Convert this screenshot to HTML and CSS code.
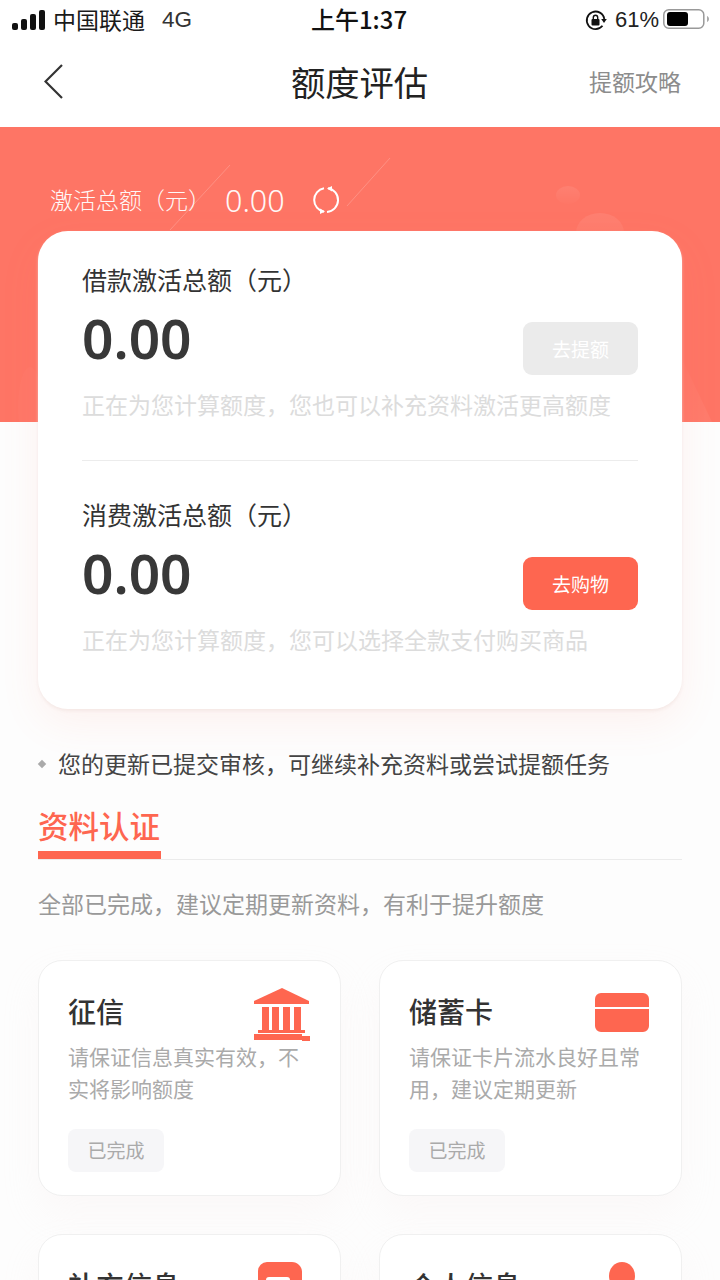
FILE: index.html
```html
<!DOCTYPE html>
<html lang="zh">
<head>
<meta charset="utf-8">
<title>额度评估</title>
<link rel="stylesheet" href="styles.css">
</head>
<body>
<div class="page">
  <div class="status">
    <div class="status-left">
      <svg class="signal" width="34" height="20" viewBox="0 0 34 20"><rect x="0" y="13" width="6" height="7" rx="2"/><rect x="9" y="9" width="6" height="11" rx="2"/><rect x="18" y="4" width="6" height="16" rx="2"/><rect x="27" y="0" width="6" height="20" rx="2"/></svg>
      <span class="carrier">中国联通</span>
      <span class="net">4G</span>
    </div>
    <div class="status-time">上午1:37</div>
    <div class="status-right">
      <svg class="lock" width="22" height="22" viewBox="0 0 22 22"><path d="M17.500 16.800A8.800 8.800 0 1 1 19.300 10" fill="none" stroke="#111" stroke-width="1.800"/><path d="M21.800 10 19 14l-2.800-4z" fill="#111"/><rect x="6.500" y="10" width="8" height="6.500" rx="1" fill="#111"/><path d="M8.300 10.500V8.500a2.200 2.200 0 0 1 4.400 0v2" fill="none" stroke="#111" stroke-width="1.400"/></svg>
      <span class="pct">61%</span>
      <svg class="battery" width="46" height="20" viewBox="0 0 46 20"><rect x="0.800" y="0.800" width="40" height="18.400" rx="5" fill="none" stroke="#999" stroke-width="1.500"/><rect x="4" y="3" width="21" height="14" rx="3" fill="#000"/><path d="M44 7c1.300.5 2 1.600 2 3s-.7 2.500-2 3z" fill="#aaa"/></svg>
    </div>
  </div>
  <header class="nav">
    <svg class="back" width="20" height="36" viewBox="0 0 20 36"><path d="M18 1 1.500 17.500 18 34" fill="none" stroke="#333" stroke-width="2.200"/></svg>
    <h1 class="nav-title">额度评估</h1>
    <span class="nav-link">提额攻略</span>
  </header>
  <section class="hero">
    <svg class="hero-art" width="720" height="295" viewBox="0 0 720 295">
      <defs>
        <linearGradient id="blob" x1="0" y1="0" x2="0" y2="1"><stop offset="0" stop-color="#fff" stop-opacity=".08"/><stop offset="1" stop-color="#fff" stop-opacity=".01"/></linearGradient>
        <linearGradient id="slope" x1="0" y1="0" x2="1" y2="1"><stop offset="0" stop-color="#fff" stop-opacity=".01"/><stop offset="1" stop-color="#fff" stop-opacity=".05"/></linearGradient>
      </defs>
      <path d="M230 38 170 103M390 31 347 79" stroke="#fff" stroke-opacity=".2" stroke-width="1" fill="none"/>
      <ellipse cx="568" cy="68" rx="12" ry="9" fill="url(#blob)"/>
      <ellipse cx="600" cy="106" rx="24" ry="20" fill="url(#blob)"/>
      <path d="M682 232 712 295H682z" fill="url(#slope)"/>
      <ellipse cx="30" cy="280" rx="12" ry="40" fill="#fff" fill-opacity=".02"/>
    </svg>
    <div class="hero-row">
      <span class="hero-label">激活总额（元）</span>
      <span class="hero-value">0.00</span>
      <svg class="refresh" width="28" height="28" viewBox="0 0 28 28"><path d="M16 2.200A12 12 0 0 1 15 26M12 25.800A12 12 0 0 1 12 2.200" fill="none" stroke="#fff" stroke-width="2"/><path d="M15 2.400 20 0v5.500zM13 25.600 8 28v-5.500z" fill="#fff"/></svg>
    </div>
  </section>
  <main class="content">
    <section class="quota">
      <div class="quota-block quota-first">
        <div class="quota-title">借款激活总额（元）</div>
        <div class="quota-main">
          <span class="amount">0.00</span>
          <span class="btn btn-off">去提额</span>
        </div>
        <div class="quota-hint">正在为您计算额度，您也可以补充资料激活更高额度</div>
      </div>
      <div class="quota-block quota-second">
        <div class="quota-title">消费激活总额（元）</div>
        <div class="quota-main">
          <span class="amount">0.00</span>
          <span class="btn btn-on">去购物</span>
        </div>
        <div class="quota-hint">正在为您计算额度，您可以选择全款支付购买商品</div>
      </div>
    </section>
    <div class="notice"><i class="diamond"></i><span>您的更新已提交审核，可继续补充资料或尝试提额任务</span></div>
    <div class="tabs"><span class="tab">资料认证</span></div>
    <p class="sub">全部已完成，建议定期更新资料，有利于提升额度</p>
    <div class="grid">
      <article class="item">
        <div class="item-head">
          <h2 class="item-title">征信</h2>
          <svg class="item-icon bank" width="58" height="54" viewBox="0 0 58 54"><path d="M29 0 56 13v3H1v-3z"/><path d="M9 19h7v23H9zM19 19h7v23h-7zM30 19h7v23h-7zM41 19h7v23h-7z"/><rect x="5" y="42" width="47" height="3"/><path d="M1 46h48v2h8v5H49v-1H1z"/></svg>
        </div>
        <p class="item-desc">请保证信息真实有效，不实将影响额度</p>
        <span class="done">已完成</span>
      </article>
      <article class="item">
        <div class="item-head">
          <h2 class="item-title">储蓄卡</h2>
          <svg class="item-icon card" width="54" height="39" viewBox="0 0 54 39"><path d="M6 0h42a6 6 0 0 1 6 6v8H0V6a6 6 0 0 1 6-6zM0 16h54v17a6 6 0 0 1-6 6H6a6 6 0 0 1-6-6z"/></svg>
        </div>
        <p class="item-desc">请保证卡片流水良好且常用，建议定期更新</p>
        <span class="done">已完成</span>
      </article>
      <article class="item">
        <div class="item-head">
          <h2 class="item-title">补充信息</h2>
          <svg class="item-icon doc" width="44" height="50" viewBox="0 0 44 50"><path d="M9 0h25c5.500 0 10 4.500 10 10v32a8 8 0 0 1-8 8H8a8 8 0 0 1-8-8V9a9 9 0 0 1 9-9z"/><rect x="8" y="15" width="24" height="12" rx="3" fill="#fff"/></svg>
        </div>
      </article>
      <article class="item">
        <div class="item-head">
          <h2 class="item-title">个人信息</h2>
          <svg class="item-icon person" width="26" height="50" viewBox="0 0 26 50"><ellipse cx="13" cy="14" rx="13" ry="14"/><rect x="9" y="20" width="8" height="4" fill="#fff" fill-opacity=".5"/></svg>
        </div>
      </article>
    </div>
  </main>
</div>
</body>
</html>
```

FILE: styles.css
```css
* { box-sizing: border-box; }
html, body { margin: 0; padding: 0; }
body {
  width: 720px;
  height: 1280px;
  overflow: hidden;
  background: #fff;
  font-family: "Noto Sans CJK SC", "Noto Sans", "Liberation Sans", sans-serif;
}
.page { width: 720px; height: 1280px; overflow: hidden; background: #fdfdfd; }

.status {
  height: 42px;
  background: #fff;
  display: grid;
  grid-template-columns: 1fr auto 1fr;
  align-items: center;
  padding: 0 11px 2px 12px;
  color: #1a1a1a;
}
.status-left { display: flex; align-items: center; }
.signal { fill: #111; margin-right: 7px; }
.carrier { font-size: 23px; line-height: 28px; margin-bottom: 3px; }
.net { font-size: 22.500px; line-height: 28px; margin-left: 17px; font-family: "Liberation Sans", sans-serif; color: #333; }
.status-time { font-size: 24px; line-height: 28px; font-weight: 500; color: #111; margin: 0 3px 2px 0; }
.status-right { display: flex; align-items: center; justify-content: flex-end; }
.lock { margin-right: 8px; }
.pct { font-size: 22px; line-height: 28px; font-family: "Liberation Sans", sans-serif; color: #222; margin-right: 4px; }
.battery { margin-bottom: 2px; }

.nav {
  height: 85px;
  background: #fff;
  display: grid;
  grid-template-columns: 1fr auto 1fr;
  align-items: center;
  padding: 0 39px 0 44px;
}
.back { display: block; margin-bottom: 5px; }
.nav-title { margin: 0 6px 7px 0; font-size: 34.300px; line-height: 44px; font-weight: 400; color: #222; }
.nav-link { justify-self: end; font-size: 23px; line-height: 30px; color: #8c8c8c; margin-bottom: 8px; }

.hero {
  position: relative;
  height: 295px;
  background: #fe7565;
  overflow: hidden;
  padding: 54px 0 0 50px;
}
.hero-art { position: absolute; left: 0; top: 0; }
.hero-row { position: relative; display: flex; align-items: center; height: 36px; color: #fff; }
.hero-label { font-size: 23px; line-height: 36px; opacity: .95; font-weight: 300; width: 175px; }
.hero-value { font-size: 30.500px; line-height: 36px; font-family: "Noto Sans", sans-serif; font-weight: 300; opacity: .95; width: 87px; margin-top: 2px; }
.refresh { margin-top: 2px; }

.content { padding: 0 38px; }

.quota {
  position: relative;
  margin-top: -191px;
  height: 478px;
  background: #fff;
  border-radius: 30px;
  padding: 0 44px;
  box-shadow: 0 2px 3px rgba(240, 225, 222, .6), 0 14px 40px rgba(254, 117, 101, .09);
}
.quota-block { height: 230px; }
.quota-first { padding-top: 30px; border-bottom: 1px solid #ececec; }
.quota-second { padding-top: 35px; }
.quota-title { font-size: 25px; line-height: 36px; color: #333; }
.quota-main { display: flex; justify-content: space-between; align-items: flex-start; height: 72px; margin-top: 9px; }
.amount { font-size: 55px; line-height: 64px; font-weight: 600; color: #383838; font-family: "Noto Sans", sans-serif; }
.btn {
  width: 115px;
  height: 53px;
  margin-top: 16px;
  border-radius: 9px;
  font-size: 19px;
  line-height: 53px;
  text-align: center;
  color: #fff;
}
.btn-off { background: #ebebeb; }
.btn-on { background: #fe6650; }
.quota-hint { font-size: 23px; line-height: 32px; color: #dcdcdc; margin-top: 10px; white-space: nowrap; }

.notice { display: flex; align-items: center; height: 36px; margin-top: 36px; }
.diamond { width: 6px; height: 6px; margin: 2px 13px 0 1px; background: #aaa; transform: rotate(45deg); }
.notice span { font-size: 23px; line-height: 36px; color: #444; }

.tabs { display: flex; border-bottom: 1px solid #ebebeb; margin-top: 19px; height: 60px; }
.tab { height: 59px; font-size: 30.500px; line-height: 50px; font-weight: 500; color: #fe6650; border-bottom: 8px solid #fe6650; padding-right: 1px; }

.sub { margin: 26px 0 0; font-size: 23px; line-height: 34px; color: #999; }

.grid { display: grid; grid-template-columns: 303px 303px; justify-content: space-between; row-gap: 38px; margin-top: 40px; }
.item {
  height: 236px;
  background: #fff;
  border: 1px solid #f0f0f0;
  border-radius: 24px;
  padding: 25px 29px 0;
  box-shadow: 0 18px 36px rgba(240, 225, 222, .16);
}
.item-head { position: relative; height: 52px; }
.item-title { margin: 0; font-size: 28px; line-height: 50px; font-weight: 500; color: #333; }
.item-icon { position: absolute; fill: #fe6650; }
.bank { right: 0; top: 2px; }
.card { right: 3px; top: 7px; }
.doc { right: 9px; top: 2px; }
.person { right: 17px; top: 2px; }
.item-desc { margin: 2px 0 0; font-size: 21px; line-height: 32px; height: 64px; color: #aaa; }
.done {
  display: block;
  width: 96px;
  height: 43px;
  margin-top: 25px;
  background: #f6f6f8;
  border-radius: 8px;
  font-size: 19px;
  line-height: 41px;
  text-align: center;
  color: #aaa;
}
```
